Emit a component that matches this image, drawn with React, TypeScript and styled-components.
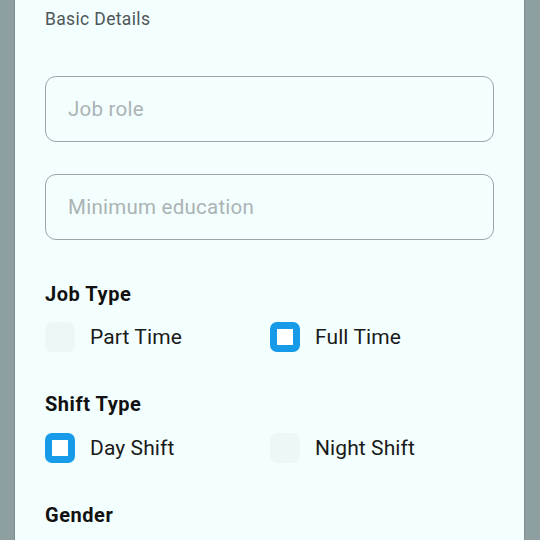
import React from "react";
import styled, { createGlobalStyle } from "styled-components";

const Global = createGlobalStyle`
  html, body { margin: 0; padding: 0; background: #8d9fa1; }
  body { font-family: Roboto, "Noto Sans", sans-serif; }
`;

const Screen = styled.div`
  width: 540px;
  height: 540px;
  overflow: hidden;
  background: #8d9fa1;
  display: flex;
  padding-left: 14px;
  box-sizing: border-box;
`;

const Panel = styled.div`
  width: 511px;
  height: 540px;
  background: #f3fefe;
  border-left: 1px solid #7d8e90;
  border-right: 1px solid #7d8e90;
  box-sizing: border-box;
  padding: 8px 30px 0 30px;
  display: flex;
  flex-direction: column;
`;

const Caption = styled.div`
  font-size: 17.5px;
  color: #4e5658;
  letter-spacing: 0.35px;
  height: 22px;
  line-height: 22px;
  margin-bottom: 46px;
`;

const Field = styled.div`
  height: 66px;
  box-sizing: border-box;
  border: 1px solid #9aa6a8;
  border-radius: 11px;
  display: flex;
  align-items: center;
  padding-left: 22px;
  font-size: 20.5px;
  letter-spacing: 0.25px;
  color: #abb3b4;
  margin-bottom: 32px;
`;

const Heading = styled.div<{ $top: number }>`
  font-size: 20px;
  font-weight: 700;
  letter-spacing: 0.55px;
  color: #111;
  height: 24px;
  line-height: 24px;
  margin-top: ${(p) => p.$top}px;
`;

const OptionRow = styled.div<{ $gap: number }>`
  display: grid;
  grid-template-columns: 225px 1fr;
  margin-top: ${(p) => p.$gap}px;
`;

const Option = styled.div`
  display: flex;
  align-items: center;
  gap: 15px;
  font-size: 21px;
  letter-spacing: 0.1px;
  color: #1a1a1a;
  height: 30px;
`;

const Box = styled.div<{ $on: boolean }>`
  width: 30px;
  height: 30px;
  box-sizing: border-box;
  border-radius: 7px;
  background: ${(p) => (p.$on ? "#ffffff" : "#eef7f8")};
  border: ${(p) => (p.$on ? "7px solid #179be9" : "none")};
`;

const Check = ({ on, label }: { on: boolean; label: string }) => (
  <Option>
    <Box $on={on} />
    <span>{label}</span>
  </Option>
);

export default function App() {
  return (
    <Screen>
      <Global />
      <Panel>
        <Caption>Basic Details</Caption>
        <Field>Job role</Field>
        <Field>Minimum education</Field>
        <Heading $top={10}>Job Type</Heading>
        <OptionRow $gap={16}>
          <Check on={false} label="Part Time" />
          <Check on={true} label="Full Time" />
        </OptionRow>
        <Heading $top={40}>Shift Type</Heading>
        <OptionRow $gap={17}>
          <Check on={true} label="Day Shift" />
          <Check on={false} label="Night Shift" />
        </OptionRow>
        <Heading $top={40}>Gender</Heading>
      </Panel>
    </Screen>
  );
}
